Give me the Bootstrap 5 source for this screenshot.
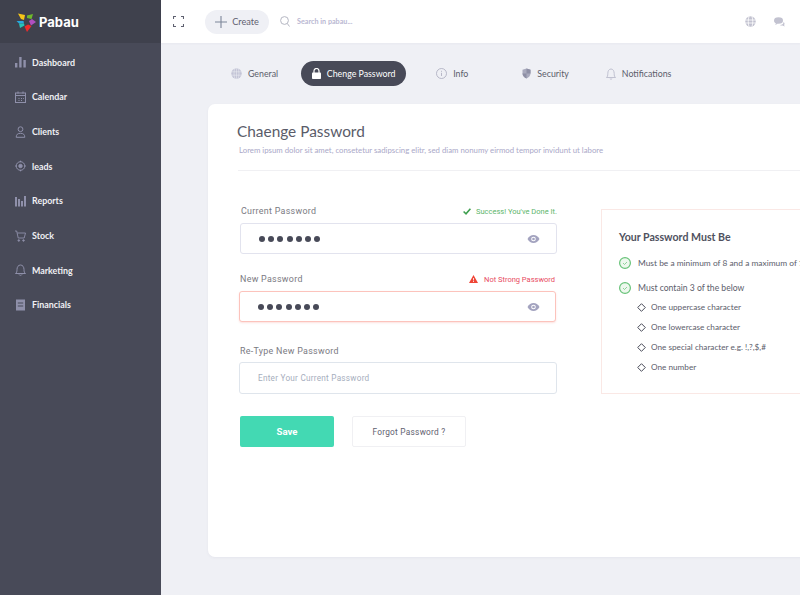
<!DOCTYPE html>
<html lang="en">
<head>
<meta charset="utf-8">
<title>Pabau</title>
<link href="https://cdn.jsdelivr.net/npm/bootstrap@5.3.0/dist/css/bootstrap.min.css" rel="stylesheet">
<style>
html,body{height:595px;overflow:hidden}
body{background:#eff0f5;font-family:"Lato",sans-serif;color:#484a58}
.shell{height:595px;width:800px;overflow:hidden}
.side{width:161px;flex:none;background:#484a58}
.brand{height:43px;background:#3f414d;padding-left:16px;gap:3px}
.brand-name{font:700 13px "Inter",sans-serif;color:#fff}
.side-menu{padding-top:2px}
.side-link{height:34.7px;padding-left:15px;gap:6px;color:#f0f0f4;font-size:8.9px;font-weight:700;text-decoration:none}
.side-link svg{width:11px;height:12px;flex:none;color:#8f90aa}
.main-col{min-width:0;width:639px}
.topbar{height:43px;background:#fff;padding-left:12px;padding-right:15px;box-shadow:0 1px 2px rgba(60,60,90,.04)}
.create-pill{height:24px;width:64px;margin-left:21px;border-radius:12px;background:#eff0f5;font-size:9.2px;color:#5f6170;gap:5px;justify-content:center}
.search-hint{font-size:7.2px;font-weight:700;color:#b9b7d2;margin-left:7px;padding-top:1px}
.search-ico{margin-left:11px}
.ico-top{color:#c2c2d0}
.ico-gap{margin-left:18px}
.tabs-row{height:61px;padding-left:70px}
.tab-item{font-size:8.8px;color:#5b5d6b;gap:6px;text-decoration:none}
.tab-on{background:#484a58;color:#fff;height:25px;width:105px;border-radius:13px;justify-content:center;gap:6px;margin-left:23px}
.tab-info{margin-left:30px}
.tab-sec{margin-left:54px}
.tab-note{margin-left:37px}
.panel{width:680px;height:453px;margin-left:47px;background:#fff;border-radius:7px;padding:17px 0 0 29px;box-shadow:0 1px 3px rgba(60,60,90,.05)}
.panel-title{font-size:15.4px;font-weight:400;color:#5a5c69;margin:0;line-height:20px}
.panel-sub{font-size:7.8px;color:#aaa8c8;margin:3px 0 0 2px;line-height:12px}
.rule{height:1px;background:#f0f0f3;margin:14px 0 0 1px}
.form-area{padding-top:33px;padding-left:2px}
.form-col{width:318px;flex:none}
.lab{font:400 8.9px "Roboto",sans-serif;letter-spacing:.3px;color:#7a7a82;margin:0}
.lab-row{height:14px;padding:0 1px}
.lab-first{padding-left:2px;padding-right:0}
.lab-second{margin-top:18px}
.msg-ok{font:400 7.5px "Roboto",sans-serif;color:#5cb56a;gap:5px}
.msg-bad{font:400 7.5px "Roboto",sans-serif;color:#e84a62;gap:6px;padding-right:1px}
.field-box{height:31px;border:1px solid #e2e3ee;border-radius:3px;background:#fff;padding:0 16px 0 18px;margin-top:5px}
.field-first{margin-left:1px}
.field-bad{border-color:#fcc3bc;box-shadow:0 1px 2px rgba(240,120,110,.22);margin-right:1px;padding-right:15px}
.field-plain{height:32px;border-color:#dfe5ec;margin-top:4px}
.dots{gap:3.2px}
.dots i{display:block;width:6px;height:6px;border-radius:50%;background:#484a58}
.hint{font:400 8.2px "Roboto",sans-serif;letter-spacing:.25px;color:#a6aebd}
.lab-third{margin-top:22px}
.btn-row{margin-top:22px;margin-left:1px}
.save-btn{width:94px;height:31px;background:#43d9b3;border:0;border-radius:2px;color:#fff;font:700 9.6px "Roboto",sans-serif;padding:0}
.forgot-btn{width:114px;height:31px;background:#fff;border:1px solid #f0f0f3;border-radius:2px;color:#5f6170;font:400 8.3px "Roboto",sans-serif;letter-spacing:.25px;padding:0;margin-left:18px}
.rules-box{width:240px;height:185px;flex:none;margin:5px 0 0 44px;border:1px solid #fae8e5;padding:20px 0 0 17px;overflow:hidden;white-space:nowrap}
.rules-title{font-size:10.6px;font-weight:700;color:#4f515e;margin:0 0 9px;line-height:14px}
.rule-line{font-size:8.2px;color:#5b5d6b;height:20px;gap:7px}
.rule-line svg{flex:none}
.rule-a{margin-bottom:6px;font-size:8.4px}
.rule-b{height:18px;font-size:8.6px}
.rule-sub{padding-left:18px;gap:5px}
</style>
</head>
<body>
<div class="shell d-flex">
  <aside class="side">
    <div class="brand d-flex align-items-center">
      <svg width="20" height="20" viewBox="0 0 20 20">
        <path d="M2 1.500L9 3 8 8 5 7z" fill="#f5c518"/><path d="M17 2l-1.500 5L11 6V3.500z" fill="#6fb92c"/><path d="M20 10l-5 3.500L13 9l3-2z" fill="#b04fc0"/><path d="M11 20L8.500 14.500 12 12.500 15.500 14z" fill="#ee2b2b"/><path d="M.5 9h7l.5 2.500H3z" fill="#27a8e0"/><path d="M3 11.500h5l.5 2L4 16z" fill="#25c3b8"/>
      </svg>
      <span class="brand-name">Pabau</span>
    </div>
    <nav class="side-menu d-flex flex-column">
      <a class="side-link d-flex align-items-center" href="#"><svg viewBox="0 0 11 12" fill="currentColor"><rect x="0" y="7" width="2.4" height="4.5"/><rect x="4.2" y="1" width="2.4" height="10.5"/><rect x="8.4" y="4" width="2.4" height="7.5"/></svg>Dashboard</a>
      <a class="side-link d-flex align-items-center" href="#"><svg viewBox="0 0 11 12" fill="none" stroke="currentColor"><rect x=".5" y="2" width="10" height="9.5"/><path d="M.5 4.5h10M3 .5v2M8 .5v2"/><path d="M3.5 7.500h1M6 7.500h1M8 7.500h.8M3.500 9.500h1M6 9.500h1" stroke-width="1"/></svg>Calendar</a>
      <a class="side-link d-flex align-items-center" href="#"><svg viewBox="0 0 11 12" fill="none" stroke="currentColor"><circle cx="5.500" cy="3.200" r="2.400"/><path d="M1.200 11.300c0-2.900 1.600-4 4.300-4s4.300 1.100 4.300 4z"/></svg>Clients</a>
      <a class="side-link d-flex align-items-center" href="#"><svg viewBox="0 0 11 12" fill="none" stroke="currentColor"><circle cx="5.500" cy="6" r="4.300"/><circle cx="5.500" cy="6" r="1.700" fill="currentColor"/><path d="M5.500.7v1.500M5.500 9.800v1.500M.2 6h1.500M9.300 6h1.500"/></svg>leads</a>
      <a class="side-link d-flex align-items-center" href="#"><svg viewBox="0 0 11 12" fill="currentColor"><rect x="0" y="2" width="2" height="9.500"/><rect x="3" y="4" width="2" height="7.500"/><rect x="6" y="6" width="2" height="5.500"/><rect x="9" y="1" width="2" height="10.500"/></svg>Reports</a>
      <a class="side-link d-flex align-items-center" href="#"><svg viewBox="0 0 11 12" fill="none" stroke="currentColor" stroke-width=".9"><path d="M0 1h1.700l1.500 7h6l1.300-5H2.300"/><circle cx="3.800" cy="10.500" r=".8" fill="currentColor"/><circle cx="8.500" cy="10.500" r=".8" fill="currentColor"/></svg>Stock</a>
      <a class="side-link d-flex align-items-center" href="#"><svg viewBox="0 0 11 12" fill="none" stroke="currentColor"><path d="M.5 9.500c1.200-.8 1.500-2 1.500-4 0-2.500 1.300-4.500 3.500-4.500S9 3 9 5.500c0 2 .3 3.200 1.500 4z"/><path d="M4 10.500a1.600 1.200 0 0 0 3 0"/></svg>Marketing</a>
      <a class="side-link d-flex align-items-center" href="#"><svg viewBox="0 0 11 12" fill="currentColor"><path d="M1 .5h9v11H1z"/><path d="M2.800 3.500h5.400v1H2.800zM2.800 6.500h5.400v1H2.800z" fill="#484a58"/></svg>Financials</a>
    </nav>
  </aside>
  <div class="main-col flex-grow-1">
    <header class="topbar d-flex align-items-center">
      <svg width="11" height="11" viewBox="0 0 11 11" fill="none" stroke="#5f6170" stroke-width="1.100"><path d="M.5 3V.5H3M8 .5h2.500V3M10.500 8v2.500H8M3 10.500H.5V8"/></svg>
      <div class="create-pill d-flex align-items-center"><svg width="12" height="12" viewBox="0 0 12 12" stroke="#7c8699" stroke-width="1.100"><path d="M6 0v12M0 6h12"/></svg>Create</div>
      <svg class="search-ico" width="10" height="11" viewBox="0 0 10 11" fill="none" stroke="#b4b6c2"><circle cx="4.500" cy="4.500" r="3.900"/><path d="M7.300 7.500L9.500 10.500"/></svg>
      <span class="search-hint">Search in pabau...</span>
      <svg class="ico-top ms-auto" width="11" height="11" viewBox="0 0 11 11" fill="currentColor"><circle cx="5.500" cy="5.500" r="5.200"/><path d="M4 .5c-1 3-1 7 0 10M7 .5c1 3 1 7 0 10M.3 4h10.400M.3 7h10.400" stroke="#fff" stroke-width=".8" fill="none"/></svg>
      <svg class="ico-top ico-gap" width="11" height="10" viewBox="0 0 11 10" fill="currentColor"><ellipse cx="4.500" cy="3.500" rx="4.500" ry="3.300"/><path d="M2 6l-.8 2 3-1.500z"/><path d="M9.500 5c1.300.8 1.300 2.300.6 3l.6 1.500-2.200-1c-1 .2-2 0-2.500-.5 2 0 3.700-1.200 3.500-3z"/></svg>
    </header>
    <div class="tabs-row d-flex align-items-center">
      <a class="tab-item d-flex align-items-center" href="#"><svg width="11" height="11" viewBox="0 0 11 11" fill="#c3c4d6"><circle cx="5.500" cy="5.500" r="5.200"/><path d="M3.800.5c-1 3-1 7 0 10M7.200.5c1 3 1 7 0 10M.3 3.800h10.400M.3 7.200h10.400M5.500.3v10.400" stroke="#eff0f5" stroke-width=".5" fill="none"/></svg>General</a>
      <a class="tab-item tab-on d-flex align-items-center" href="#"><svg width="9" height="11" viewBox="0 0 9 11" fill="#fff"><rect y="4.500" width="9" height="6.500" rx=".8"/><path d="M2 5V3a2.500 2.500 0 0 1 5 0v2" fill="none" stroke="#fff" stroke-width="1.200"/></svg>Chenge Password</a>
      <a class="tab-item tab-info d-flex align-items-center" href="#"><svg width="11" height="11" viewBox="0 0 11 11" fill="none" stroke="#a9aabd" stroke-width=".8"><circle cx="5.500" cy="5.500" r="5"/><path d="M5.500 4.800v3.200M5.500 2.800v1"/></svg>Info</a>
      <a class="tab-item tab-sec d-flex align-items-center" href="#"><svg width="9" height="11" viewBox="0 0 9 11"><path d="M4.500.5l4 1.300v3.500c0 2.600-1.700 4.200-4 5.200-2.300-1-4-2.600-4-5.200V1.800z" fill="#a9aabd"/><path d="M4.500.5v5h4v-.2V1.800zM4.500 5.500h-4c.2 2.400 1.800 4 4 5z" fill="#8e8fa5"/></svg>Security</a>
      <a class="tab-item tab-note d-flex align-items-center" href="#"><svg width="10" height="12" viewBox="0 0 10 12" fill="none" stroke="#b4b5c6" stroke-width=".8"><path d="M.5 9.500c1-.8 1.300-2 1.300-4C1.800 3 3 1 5 1s3.200 2 3.200 4.500c0 2 .3 3.200 1.300 4z"/><path d="M3.800 10.500a1.300 1 0 0 0 2.400 0"/></svg>Notifications</a>
    </div>
    <section class="panel">
      <h1 class="panel-title">Chaenge Password</h1>
      <p class="panel-sub">Lorem ipsum dolor sit amet, consetetur sadipscing elitr, sed diam nonumy eirmod tempor invidunt ut labore</p>
      <div class="rule"></div>
      <div class="form-area d-flex">
        <form class="form-col">
          <div class="lab-row lab-first d-flex justify-content-between align-items-center">
            <label class="lab">Current Password</label>
            <span class="msg-ok d-flex align-items-center"><svg width="8" height="7" viewBox="0 0 8 7" fill="none" stroke="#3e9f4f" stroke-width="1.600"><path d="M.6 3.500L3 5.800 7.400.8"/></svg>Success! You've Done It.</span>
          </div>
          <div class="field-box field-first d-flex align-items-center justify-content-between">
            <div class="dots d-flex"><i></i><i></i><i></i><i></i><i></i><i></i><i></i></div>
            <svg width="13" height="8" viewBox="0 0 12 8"><path d="M0 4c1.500-2.500 3.500-4 6-4s4.500 1.500 6 4c-1.500 2.500-3.500 4-6 4S1.500 6.500 0 4z" fill="#a3a3bf"/><circle cx="6" cy="4" r="2.300" fill="#fff"/><circle cx="6" cy="4" r="1.300" fill="#a3a3bf"/></svg>
          </div>
          <div class="lab-row lab-second d-flex justify-content-between align-items-center">
            <label class="lab">New Password</label>
            <span class="msg-bad d-flex align-items-center"><svg width="9" height="8" viewBox="0 0 9 8"><path d="M4.500 0L9 8H0z" fill="#ef4536"/><path d="M4.500 3v2.500M4.500 6v1" stroke="#fff" stroke-width=".8"/></svg>Not Strong Password</span>
          </div>
          <div class="field-box field-bad d-flex align-items-center justify-content-between">
            <div class="dots d-flex"><i></i><i></i><i></i><i></i><i></i><i></i><i></i></div>
            <svg width="13" height="8" viewBox="0 0 12 8"><path d="M0 4c1.500-2.500 3.500-4 6-4s4.500 1.500 6 4c-1.500 2.500-3.500 4-6 4S1.500 6.500 0 4z" fill="#a3a3bf"/><circle cx="6" cy="4" r="2.300" fill="#fff"/><circle cx="6" cy="4" r="1.300" fill="#a3a3bf"/></svg>
          </div>
          <div class="lab-row lab-third d-flex align-items-center">
            <label class="lab">Re-Type New Password</label>
          </div>
          <div class="field-box field-plain d-flex align-items-center"><span class="hint">Enter Your Current Password</span></div>
          <div class="btn-row d-flex">
            <button class="save-btn" type="button">Save</button>
            <button class="forgot-btn" type="button">Forgot Password ?</button>
          </div>
        </form>
        <div class="rules-box">
          <h2 class="rules-title">Your Password Must Be</h2>
          <div class="rule-line rule-a d-flex align-items-center"><svg width="12" height="12" viewBox="0 0 12 12" fill="#eef8ee" stroke="#67c278" stroke-width="1.200"><circle cx="6" cy="6" r="5.400"/><path d="M4 6l1.500 1.500L8 5" fill="none" stroke-width=".7"/></svg>Must be a minimum of 8 and a maximum of 15</div>
          <div class="rule-line rule-b d-flex align-items-center"><svg width="12" height="12" viewBox="0 0 12 12" fill="#eef8ee" stroke="#67c278" stroke-width="1.200"><circle cx="6" cy="6" r="5.400"/><path d="M4 6l1.500 1.500L8 5" fill="none" stroke-width=".7"/></svg>Must contain 3 of the below</div>
          <div class="rule-line rule-sub d-flex align-items-center"><svg width="9" height="9" viewBox="0 0 9 9" fill="none" stroke="#484a58"><path d="M4.500.7L8.300 4.500 4.500 8.300.7 4.500z"/></svg>One uppercase character</div>
          <div class="rule-line rule-sub d-flex align-items-center"><svg width="9" height="9" viewBox="0 0 9 9" fill="none" stroke="#484a58"><path d="M4.500.7L8.300 4.500 4.500 8.300.7 4.500z"/></svg>One lowercase character</div>
          <div class="rule-line rule-sub d-flex align-items-center"><svg width="9" height="9" viewBox="0 0 9 9" fill="none" stroke="#484a58"><path d="M4.500.7L8.300 4.500 4.500 8.300.7 4.500z"/></svg>One special character e.g. !,?,$,#</div>
          <div class="rule-line rule-sub d-flex align-items-center"><svg width="9" height="9" viewBox="0 0 9 9" fill="none" stroke="#484a58"><path d="M4.500.7L8.300 4.500 4.500 8.300.7 4.500z"/></svg>One number</div>
        </div>
      </div>
    </section>
  </div>
</div>
<script src="https://cdn.jsdelivr.net/npm/bootstrap@5.3.0/dist/js/bootstrap.bundle.min.js"></script>
</body>
</html>
